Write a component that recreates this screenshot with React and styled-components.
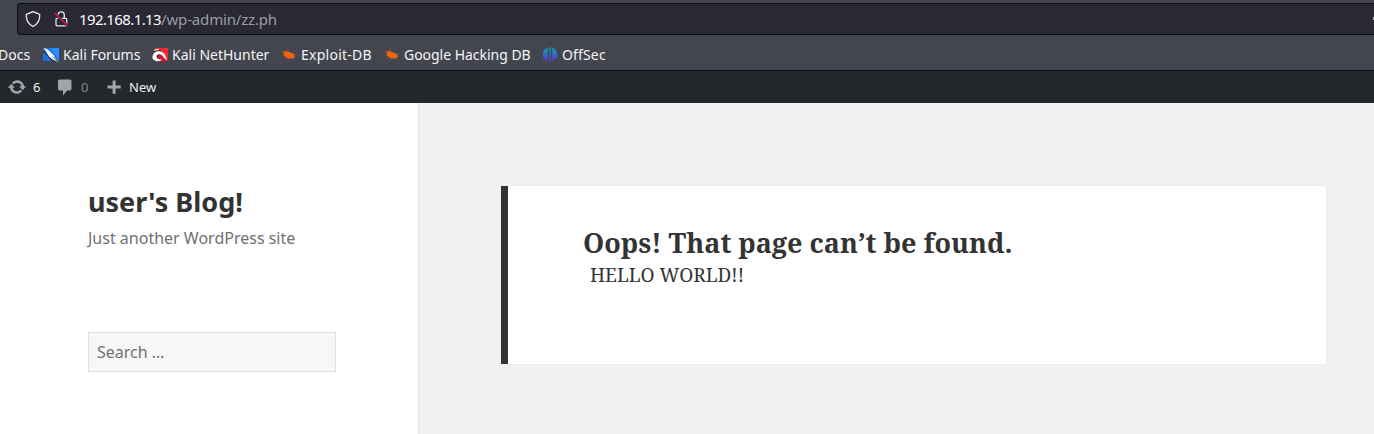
import React from "react";
import styled, { createGlobalStyle } from "styled-components";

const Global = createGlobalStyle`
  * { box-sizing: border-box; }
  body { margin: 0; font-family: "Noto Sans", sans-serif; }
`;

const Window = styled.div`
  height: 434px;
  overflow: hidden;
  display: flex;
  flex-direction: column;
  background: #f1f1f1;
`;

const Chrome = styled.header`
  height: 71px;
  flex: none;
  padding-top: 3px;
  background: #44464f;
  border-bottom: 1px solid #0d0d12;
`;

const AddressBar = styled.div`
  display: flex;
  align-items: center;
  height: 32px;
  margin-left: 17px;
  padding-left: 6px;
  background: #282935;
  border: 1px solid #0d0d12;
  border-right: 0;
  border-radius: 4px 0 0 4px;
  overflow: hidden;
`;

const Url = styled.span`
  margin-left: 9px;
  flex: 1;
  font-size: 15px;
  line-height: 20px;
  letter-spacing: -0.17px;
  white-space: nowrap;
  color: #9c9da3;
`;

const Host = styled.span`
  color: #fbfbfe;
  letter-spacing: -0.6px;
`;

const ClippedMark = styled.span`
  width: 1px;
  height: 3px;
  margin-bottom: 2px;
  background: #b9b9c0;
`;

const Bookmarks = styled.nav`
  display: flex;
  align-items: center;
  gap: 12px;
  height: 38px;
  padding-top: 1px;
`;

const Bookmark = styled.div`
  display: flex;
  align-items: center;
  gap: 4px;
  flex: none;
`;

const BookmarkLabel = styled.span`
  width: ${(p) => p.$width}px;
  font-size: 14px;
  line-height: 20px;
  letter-spacing: ${(p) => p.$spacing || 0}px;
  white-space: nowrap;
  color: #f4f4f6;
`;

const CutOffLabel = styled(BookmarkLabel)`
  margin-left: -2px;
`;

const AdminBar = styled.div`
  display: flex;
  align-items: center;
  flex: none;
  height: 32px;
  padding-left: 7px;
  background: #23282d;
`;

const AdminItem = styled.div`
  display: flex;
  align-items: center;
  gap: ${(p) => p.$gap}px;
  width: ${(p) => p.$width}px;
  font-size: 13px;
  line-height: 32px;
  color: ${(p) => (p.$muted ? "#84888c" : "#eeeeee")};
`;

const Page = styled.div`
  flex: 1;
  display: flex;
`;

const Sidebar = styled.aside`
  width: 419px;
  padding: 81px 82px 0 88px;
  background: #fff;
  border-right: 1px solid #e3e3e3;
`;

const SiteTitle = styled.h1`
  margin: 0;
  font-size: 27px;
  font-weight: 700;
  line-height: 36px;
  color: #333;
  white-space: nowrap;
`;

const Tagline = styled.p`
  margin: 6px 0 0;
  font-size: 16px;
  line-height: 24px;
  color: #707070;
  white-space: nowrap;
`;

const SearchField = styled.div`
  margin-top: 82px;
  width: 248px;
  height: 40px;
  padding: 0 8px;
  font-size: 16px;
  line-height: 38px;
  color: #707070;
  background: #f7f7f7;
  border: 1px solid #dfdfdf;
`;

const Main = styled.main`
  flex: 1;
  padding: 83px 48px 0 82px;
`;

const Article = styled.section`
  height: 178px;
  padding: 39px 0 0 75px;
  background: #fff;
  border-left: 7px solid #333;
  box-shadow: 0 0 1px rgba(0, 0, 0, 0.15);
  font-family: "Noto Serif", "DejaVu Serif Condensed", serif;
  color: #333;
`;

const Heading = styled.h2`
  margin: 0;
  font-size: 27px;
  line-height: 36px;
  font-weight: 700;
  white-space: nowrap;
`;

const Message = styled.p`
  margin: 1px 0 0 7px;
  font-size: 19px;
  line-height: 27px;
  white-space: nowrap;
`;

const ShieldIcon = () => (
  <svg width="18" height="18" viewBox="0 0 18 18" fill="none" stroke="#f0f0f4" strokeWidth="1.3" strokeLinejoin="round">
    <path d="M9 1.600 15.700 4.400C16.100 9.500 13.800 14 9 16.500 4.200 14 1.900 9.500 2.300 4.400Z" />
  </svg>
);

const LockIcon = () => (
  <svg width="18" height="18" viewBox="0 0 18 18" fill="none">
    <path d="M6.100 8V5a3.100 3.100 0 0 1 6.200 0v3M5 8.400h8.700q1 0 1 1v5.400q0 1-1 1H5q-1 0-1-1V9.400q0-1 1-1Z" stroke="#e8e8ec" strokeWidth="1.300" />
    <path d="M2.300 2.800 16 16.200" stroke="#282935" strokeWidth="2.800" />
    <path d="M2.300 2.800 16 16.200" stroke="#e0174c" strokeWidth="1.300" />
  </svg>
);

const LockSlot = styled.span`
  display: flex;
  margin-left: 10px;
`;

const ForumsIcon = () => (
  <svg width="16" height="16" viewBox="0 0 16 16">
    <path d="M0 1h16v12.800H0Z" fill="#1a72e8" />
    <path d="M7 1h9v12.800Z" fill="#2b8dff" />
    <path d="M0 1 4.500 5.500M0 4.500 5 8.500 8 12.500 12.500 14.500" stroke="#20232d" strokeWidth="1.200" fill="none" />
    <path d="M0 .8 4.800 2.500 7.600 5.200 10.800 8.200 12.200 11 15.500 15.200 9.800 12.600 6.400 9.900 4 6.500 2.800 4Z" fill="#fff" />
    <path d="M10 9.800 14.500 14.400" stroke="#20232d" strokeWidth=".7" />
  </svg>
);

const NetHunterIcon = () => (
  <svg width="16" height="16" viewBox="0 0 16 16">
    <path d="M2.500 1H16v12.500Z" fill="#f5272f" />
    <path d="M.4 7.500 8 3l5 5 2.400 6.800H5L.4 11Z" fill="#24242c" />
    <path d="M5.500 8.700 9 7l3 3.500 3 4.300H7Z" fill="#d41432" />
    <path d="M2.200 3.300 6.800 2.200" stroke="#fff" strokeWidth="1.100" />
    <path d="M.4 10.200C.6 6.200 4 3.800 7.400 4.200c4.100.4 5.600 2.900 6.300 5.500l1.700 4.400-3.500-3.300C10.400 8.300 9 6.900 6.900 7.200 4.700 7.600 4 9.200 5 10.700c1 1.300 3 1.900 5 1.800-1.500 1.700-4.300 2.300-6.600 1.200C1.400 12.900.3 11.800.4 10.200Z" fill="#fff" />
  </svg>
);

const BugIcon = () => (
  <svg width="16" height="16" viewBox="0 0 16 16">
    <path d="M2.300 5C4.800 3.400 8 4.200 9.800 6c1.700-.2 3.200 1 3.700 2.500.3 1.500-.8 2.700-2.300 2.900-2.700.7-5.500-.3-7-2.200C3 8 2.500 6.500 2.300 5Z" fill="#f0640f" />
    <path d="M.8 4 3.500 5.600M4 4.600l1.700-1.800 1.500.3M1.300 9l3.200-1.200M3 12l2.500-2.300M6.500 13l1.200-2.400M10.500 10.800l2 2M9.300 6.400l1.700-1.700M12 7.700l2.600-.4M12.700 9.600l2 .6" stroke="#f0640f" strokeWidth=".8" fill="none" opacity=".55" />
  </svg>
);

const OffSecIcon = () => (
  <svg width="16" height="16" viewBox="0 0 16 16">
    <defs>
      <linearGradient id="offsec" x1="0" y1="0" x2="0" y2="1">
        <stop offset="0" stopColor="#0ea8b4" />
        <stop offset=".5" stopColor="#316bcb" />
        <stop offset="1" stopColor="#6424c8" />
      </linearGradient>
    </defs>
    <path d="M5.800.8v13.400C2.600 13.200.6 10.900.6 7.600S2.600 1.800 5.800.8ZM10.200.8v13.400c3.200-1 5.200-3.300 5.200-6.600S13.400 1.800 10.200.8ZM7.300.2h1.400v15.300H7.300Z" fill="url(#offsec)" />
  </svg>
);

const UpdateIcon = () => (
  <svg width="20" height="20" viewBox="0 0 20 20" fill="#a0a5aa">
    <path d="M10.2 3.28c3.53 0 6.43 2.61 6.92 6h2.08l-3.5 4-3.5-4h2.32c-.45-1.97-2.21-3.45-4.32-3.45-1.45 0-2.73.71-3.54 1.78L4.95 5.66C6.23 4.2 8.11 3.28 10.2 3.28zm-.4 13.44c-3.52 0-6.43-2.61-6.92-6H.8l3.5-4c1.17 1.33 2.33 2.67 3.5 4H5.48c.45 1.97 2.21 3.45 4.32 3.45 1.45 0 2.73-.71 3.54-1.78l1.71 1.95c-1.28 1.46-3.15 2.38-5.25 2.38z" />
  </svg>
);

const CommentIcon = () => (
  <svg width="20" height="20" viewBox="0 0 20 20" fill="#a0a5aa">
    <path d="M5 2.500h9.500c1.100 0 2 .8 2 1.800v7.500c0 1-.9 1.800-2 1.800h-2.300L8 18.500v-4.900H5c-1.100 0-2-.8-2-1.800V4.300c0-1 .9-1.800 2-1.800z" />
  </svg>
);

const PlusIcon = () => (
  <svg width="14" height="14" viewBox="0 0 14 14" fill="#a0a5aa">
    <path d="M5.600.5h3v5.100h5.100v3H8.600v5.100h-3V8.600H.5v-3h5.100Z" />
  </svg>
);

const bookmarks = [
  { label: "Kali Forums", width: 77, spacing: 0, Icon: ForumsIcon },
  { label: "Kali NetHunter", width: 97, spacing: 0, Icon: NetHunterIcon },
  { label: "Exploit-DB", width: 71, spacing: 0.25, Icon: BugIcon },
  { label: "Google Hacking DB", width: 126, spacing: -0.03, Icon: BugIcon },
  { label: "OffSec", width: 44, spacing: 0.15, Icon: OffSecIcon },
];

export default function App() {
  return (
    <Window>
      <Global />
      <Chrome>
        <AddressBar>
          <ShieldIcon />
          <LockSlot>
            <LockIcon />
          </LockSlot>
          <Url>
            <Host>192.168.1.13</Host>/wp-admin/zz.ph
          </Url>
          <ClippedMark />
        </AddressBar>
        <Bookmarks>
          <CutOffLabel $width={33}>Docs</CutOffLabel>
          {bookmarks.map(({ label, width, spacing, Icon }) => (
            <Bookmark key={label}>
              <Icon />
              <BookmarkLabel $width={width} $spacing={spacing}>{label}</BookmarkLabel>
            </Bookmark>
          ))}
        </Bookmarks>
      </Chrome>
      <AdminBar>
        <AdminItem $width={48} $gap={6}>
          <UpdateIcon />6
        </AdminItem>
        <AdminItem $width={52} $gap={6} $muted>
          <CommentIcon />0
        </AdminItem>
        <AdminItem $gap={8}>
          <PlusIcon />New
        </AdminItem>
      </AdminBar>
      <Page>
        <Sidebar>
          <SiteTitle>user's Blog!</SiteTitle>
          <Tagline>Just another WordPress site</Tagline>
          <SearchField>Search …</SearchField>
        </Sidebar>
        <Main>
          <Article>
            <Heading>Oops! That page can’t be found.</Heading>
            <Message>HELLO WORLD!!</Message>
          </Article>
        </Main>
      </Page>
    </Window>
  );
}
